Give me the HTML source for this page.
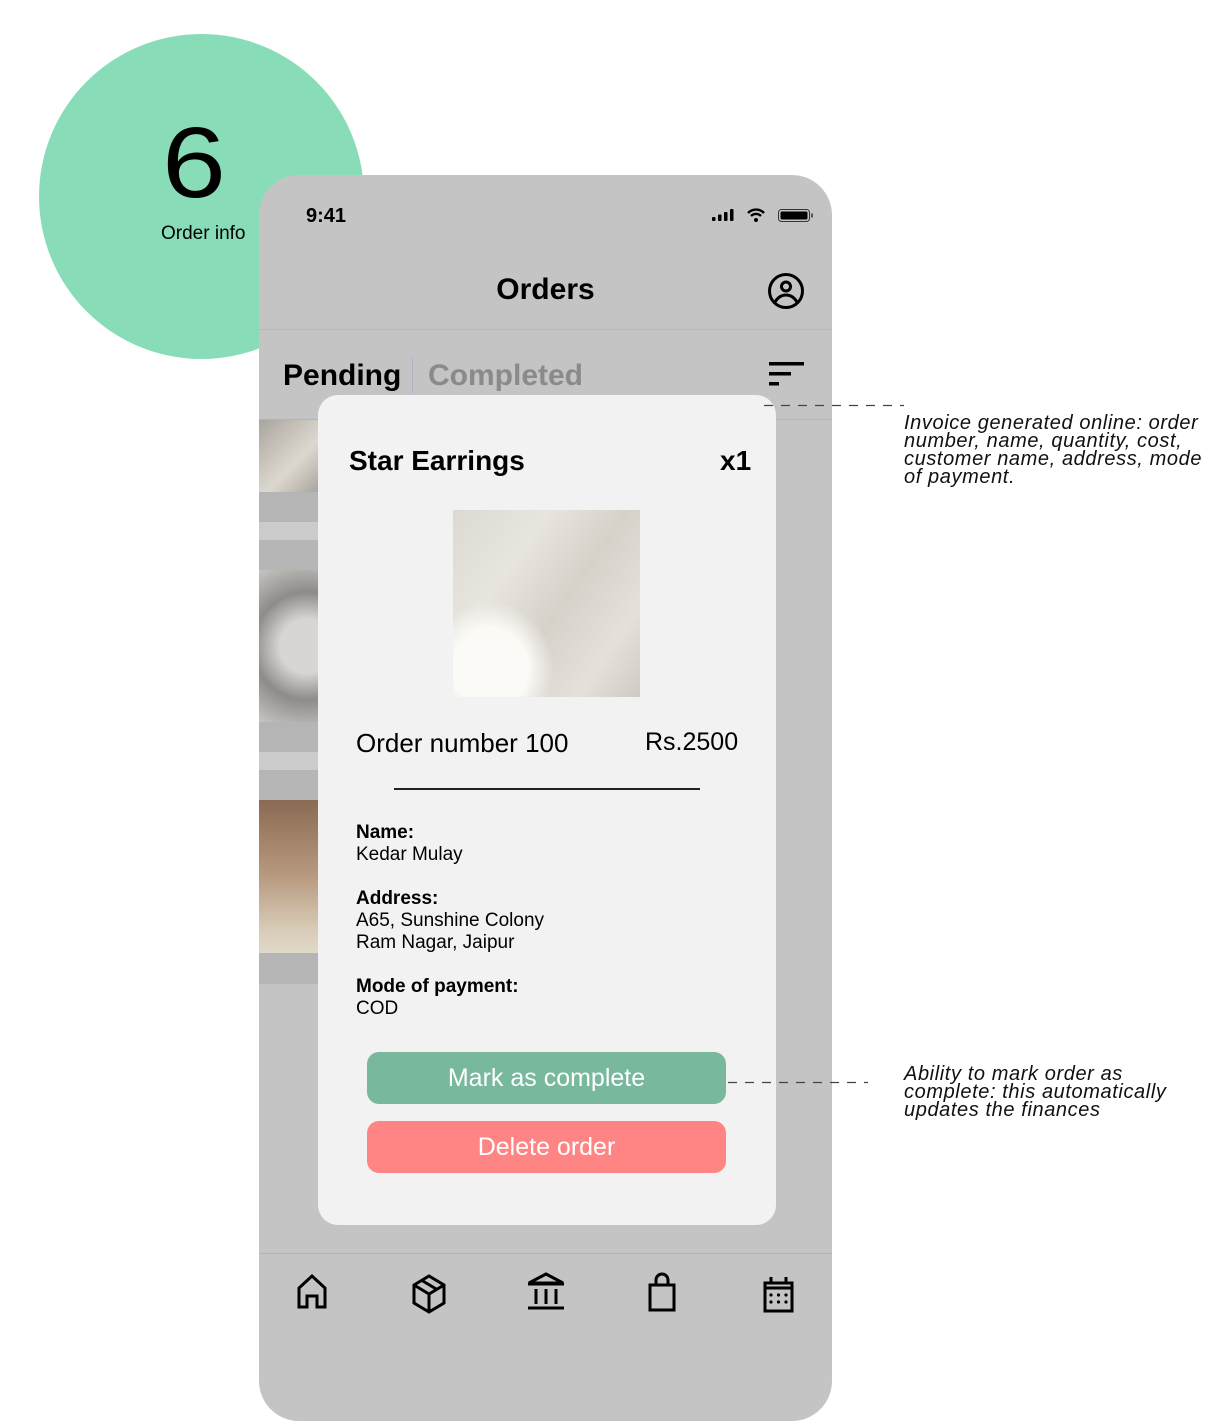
<!DOCTYPE html>
<html><head><meta charset="utf-8"><style>
*{margin:0;padding:0;box-sizing:border-box}
body{width:1229px;height:1428px;background:#fff;position:relative;overflow:hidden;font-family:"Liberation Sans",sans-serif;color:#000}
.a{position:absolute}
.circle{left:39px;top:34px;width:325px;height:325px;border-radius:50%;background:#88ddb8}
.phone{left:259px;top:175px;width:573px;height:1246px;border-radius:40px;background:#c4c4c4;overflow:hidden}
.row{left:0;width:60px;background:#b5b5b5}
.gap{left:0;width:60px;background:#cbcbcb}
.modal{left:318px;top:395px;width:458px;height:830px;border-radius:20px;background:#f2f2f2}
.note{font-style:italic;font-size:20px;line-height:18px;color:#111;letter-spacing:0.6px}
.btn{border-radius:12px;color:#fff;font-size:25px;text-align:center;line-height:52px}
</style></head><body>
<div class="a circle"></div>
<div class="a" style="left:162px;top:108px;font-size:100px;line-height:110px;font-weight:300;transform:scaleX(1.15);transform-origin:left">6</div>
<div class="a" style="left:161px;top:223px;font-size:19px">Order info</div>

<div class="a phone">
  <div class="a" style="left:47px;top:30px;font-size:20px;font-weight:bold">9:41</div>
  <svg class="a" style="left:452px;top:31px" width="104" height="20" viewBox="0 0 104 20">
    <rect x="1" y="11" width="3.5" height="4" rx="1"/><rect x="7" y="8.5" width="3.5" height="6.5" rx="1"/><rect x="13" y="6" width="3.5" height="9" rx="1"/><rect x="19" y="3" width="3.5" height="12" rx="1"/>
    <path d="M37 7 a11 11 0 0 1 16 0 M40 10 a7 7 0 0 1 10 0" stroke="#000" stroke-width="2.4" fill="none"/><circle cx="45" cy="14" r="2"/>
    <rect x="67.5" y="3.5" width="31" height="12" rx="3" fill="none" stroke="#333" stroke-width="1"/><rect x="69.5" y="5.5" width="27" height="8" rx="1.5"/><rect x="100" y="7.5" width="2" height="4" fill="#555"/>
  </svg>
  <div class="a" style="left:0;width:573px;top:98px;text-align:center;font-size:30px;font-weight:bold">Orders</div>
  <svg class="a" style="left:508px;top:97px" width="38" height="38" viewBox="0 0 38 38" fill="none" stroke="#000" stroke-width="3"><circle cx="19" cy="19" r="16.5"/><circle cx="19" cy="14.5" r="4.5"/><path d="M8 30c3-5 7-7 11-7s8 2 11 7"/></svg>
  <div class="a" style="left:0;top:154px;width:573px;border-top:1px solid #b9b6c8"></div>
  <div class="a" style="left:24px;top:184px;font-size:30px;font-weight:bold">Pending</div>
  <div class="a" style="left:153px;top:182px;height:36px;border-left:1.5px solid #b3b0c4"></div>
  <div class="a" style="left:169px;top:184px;font-size:30px;font-weight:bold;color:#8a8a8a">Completed</div>
  <svg class="a" style="left:510px;top:187px" width="36" height="26"><rect x="0" y="0" width="35" height="3.5"/><rect x="0" y="10" width="22" height="3.5"/><rect x="0" y="20" width="10" height="3.5"/></svg>
  <div class="a" style="left:0;top:244px;width:573px;border-top:1px solid #b3b0c8"></div>
  <div class="a row" style="top:245px;height:102px"></div>
  <div class="a" style="left:0;top:245px;width:60px;height:72px;background:linear-gradient(135deg,#a9a59e,#ddd8cf 60%,#a8a49d)"></div>
  <div class="a gap" style="top:347px;height:18px"></div>
  <div class="a row" style="top:365px;height:212px"></div>
  <div class="a" style="left:0;top:395px;width:60px;height:152px;background:radial-gradient(circle at 80% 50%,#d8d6d2 30%,#8e8c88 60%,#c8c6c2)"></div>
  <div class="a gap" style="top:577px;height:18px"></div>
  <div class="a row" style="top:595px;height:214px"></div>
  <div class="a" style="left:0;top:625px;width:60px;height:153px;background:linear-gradient(180deg,#8a6a52,#b89a80 50%,#d8ccb8 85%,#e0d8c8)"></div>
  <div class="a" style="left:0;top:1078px;width:573px;border-top:1px solid #b3b0c4"></div>
  <svg class="a" style="left:0;top:1090px" width="573" height="60" viewBox="0 0 573 60" fill="none" stroke="#000" stroke-width="3">
    <path d="M40 42V23l13-12 13 12v19h-8V31h-10v11z"/>
    <path d="M155 20l15-9 15 9v18l-15 9-15-9z M155 20l15 9 15-9 M170 29v18 M163 15.5l15 9"/>
    <path d="M270 18l17-9 17 9z"/><path d="M269 19h36 M277 24v15 M287 24v15 M297 24v15 M269 43h36"/>
    <path d="M391 20h24v25h-24z M397 20v-5a6 6 0 0 1 12 0v5"/>
    <path d="M506 18h27v28h-27z M506 23h27 M512 12v6 M527 12v6"/>
    <g fill="#000" stroke="none"><circle cx="512" cy="30" r="1.6"/><circle cx="519.5" cy="30" r="1.6"/><circle cx="527" cy="30" r="1.6"/><circle cx="512" cy="37" r="1.6"/><circle cx="519.5" cy="37" r="1.6"/><circle cx="527" cy="37" r="1.6"/></g>
  </svg>
</div>

<div class="a modal">
  <div class="a" style="left:31px;top:50px;font-size:28px;font-weight:bold">Star Earrings</div>
  <div class="a" style="left:402px;top:50px;font-size:28px;font-weight:bold">x1</div>
  <div class="a" style="left:135px;top:115px;width:187px;height:187px;background:radial-gradient(ellipse at 20% 85%,#fbfaf6 0 18%,transparent 30%),linear-gradient(125deg,#dcd9d2 0%,#e8e5de 30%,#d6d2ca 55%,#e4e1da 80%,#cfcbc3 100%)"></div>
  <div class="a" style="left:38px;top:333px;font-size:26px">Order number 100</div>
  <div class="a" style="left:327px;top:333px;font-size:25px">Rs.2500</div>
  <div class="a" style="left:76px;top:393px;width:306px;border-top:2px solid #222"></div>
  <div class="a" style="left:38px;top:427px;font-size:19px;line-height:22px"><b>Name:</b><br>Kedar Mulay</div>
  <div class="a" style="left:38px;top:493px;font-size:19px;line-height:22px"><b>Address:</b><br>A65, Sunshine Colony<br>Ram Nagar, Jaipur</div>
  <div class="a" style="left:38px;top:581px;font-size:19px;line-height:22px"><b>Mode of payment:</b><br>COD</div>
  <div class="a btn" style="left:49px;top:657px;width:359px;height:52px;background:#78b89c">Mark as complete</div>
  <div class="a btn" style="left:49px;top:726px;width:359px;height:52px;background:#ff8585">Delete order</div>
</div>

<svg class="a" style="left:764px;top:404px" width="140" height="4"><line x1="0" y1="1.5" x2="140" y2="1.5" stroke="#444" stroke-width="1.3" stroke-dasharray="9,8"/></svg>
<div class="a note" style="left:904px;top:414px">Invoice generated online: order<br>number, name, quantity, cost,<br>customer name, address, mode<br>of payment.</div>
<svg class="a" style="left:728px;top:1081px" width="140" height="4"><line x1="0" y1="1.5" x2="140" y2="1.5" stroke="#444" stroke-width="1.3" stroke-dasharray="9,8"/></svg>
<div class="a note" style="left:904px;top:1065px">Ability to mark order as<br>complete: this automatically<br>updates the finances</div>
</body></html>
